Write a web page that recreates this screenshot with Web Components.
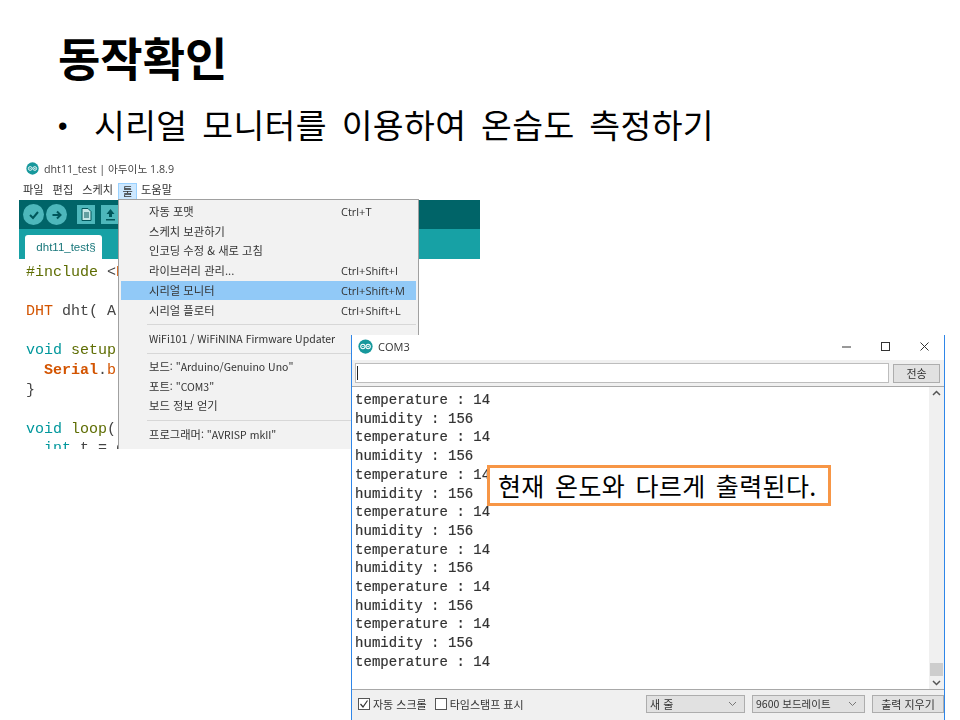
<!DOCTYPE html>
<html lang="ko"><head><meta charset="utf-8"><title>동작확인</title>
<style>
html,body{margin:0;padding:0;background:#fff}
body{width:960px;height:720px;overflow:hidden;font-family:"Noto Sans CJK KR","Liberation Sans",sans-serif}
</style></head><body>
<slide-page>
  <span slot="title">동작확인</span>
  <span slot="bullet">시리얼 모니터를 이용하여 온습도 측정하기</span>
  <ide-window slot="windows"></ide-window>
  <tools-menu slot="windows"></tools-menu>
  <serial-monitor slot="windows"></serial-monitor>
  <note-box slot="windows">현재 온도와 다르게 출력된다.</note-box>
</slide-page>
<script>
const UI='"Noto Sans CJK KR","Liberation Sans",sans-serif';
const logo=s=>`<svg width="${s}" height="${s}" viewBox="0 0 16 16" style="flex:none"><circle cx="8" cy="8" r="7.6" fill="#17989c"/><circle cx="5.2" cy="8" r="2.3" fill="none" stroke="#fff" stroke-width="1.1"/><circle cx="10.8" cy="8" r="2.3" fill="none" stroke="#fff" stroke-width="1.1"/><path d="M4.2 8h2M9.8 8h2M10.8 7v2" stroke="#fff" stroke-width=".7"/></svg>`;
function def(name,html){customElements.define(name,class extends HTMLElement{constructor(){super();this.attachShadow({mode:'open'}).innerHTML=html}})}

def('slide-page',`<style>
:host{display:block;position:relative;width:960px;height:720px;overflow:hidden;color:#000}
header{padding:27px 0 0 58px;font:700 46px/58px ${UI}}
.b{display:flex;padding:15px 0 0 58px;font:400 33.5px/48px ${UI};letter-spacing:.35px;word-spacing:5px}
.b i{font:normal 27px/52px "Liberation Sans",sans-serif;width:36px;flex:none}
</style><header><slot name="title"></slot></header><div class="b"><i>•</i><slot name="bullet"></slot></div><slot name="windows"></slot>`);

def('ide-window',`<style>
:host{display:flex;flex-direction:column;position:absolute;left:19px;top:158px;width:461px;height:291px;overflow:hidden;background:#fff;font:11.2px/1 ${UI};color:#333;filter:blur(.25px)}
.t{height:20px;flex:none;display:flex;align-items:center;gap:5px;padding-left:7px;color:#444;box-sizing:border-box;padding-top:1px}
.t b{font:400 10.7px "Open Sans","Liberation Sans",${UI}}
.m{height:22px;flex:none;display:flex;align-items:center;padding-left:4px;gap:9px;box-sizing:border-box;padding-top:2px}
.m .on{background:#cde8ff;box-shadow:inset 0 0 0 1px #99d1ff;width:19px;height:17px;margin:0 -5px 0 -4px;display:grid;place-items:center;align-self:flex-end}
.tb{height:29px;background:#006468;display:flex;align-items:center;gap:2px;padding-left:4px;flex:none}
.c{width:21px;height:21px;border-radius:50%;background:#4db7bb;display:grid;place-items:center}
.s{width:18px;height:19px;background:#4db7bb;margin-left:8px;display:grid;place-items:center}
.s+.s{margin-left:4px}
.tabs{height:30px;background:#17a1a5;display:flex;align-items:flex-end;padding-left:6px;flex:none}
.tab{height:24px;width:77px;box-sizing:border-box;padding-left:5px;background:#fff;border-radius:3px 3px 0 0;display:flex;align-items:center;justify-content:center;font:11.500px "Liberation Sans",sans-serif;color:#17767a}
pre{margin:0;padding:4px 0 0 7px;font:400 15px/19.6px "Liberation Mono",monospace;color:#444}
.g{color:#5e6d03}.o{color:#d35400}.v{color:#00979c}
</style>
<div class="t">${logo(13)}<b>dht11_test | 아두이노 1.8.9</b></div>
<div class="m"><span>파일</span><span>편집</span><span>스케치</span><span class="on">툴</span><span>도움말</span></div>
<div class="tb">
<div class="c"><svg width="12" height="12" viewBox="0 0 12 12"><path d="M2 6l3 3 5-6" fill="none" stroke="#00575b" stroke-width="2"/></svg></div>
<div class="c"><svg width="12" height="12" viewBox="0 0 12 12"><path d="M1.5 6h7M6 2.500 9.500 6 6 9.500" fill="none" stroke="#00575b" stroke-width="2"/></svg></div>
<div class="s"><svg width="11" height="13" viewBox="0 0 11 13"><path d="M1 .5h6l3 3v9H1z" fill="#c4e6e7" stroke="#00575b"/><path d="M3 5h5M3 7h5M3 9h5" stroke="#00575b"/></svg></div>
<div class="s"><svg width="13" height="13" viewBox="0 0 13 13"><path d="M6.500 1 10.500 6H8v3H5V6H2.500zM2 11h9v1.500H2z" fill="#00575b"/></svg></div>
</div>
<div class="tabs"><div class="tab">dht11_test§</div></div>
<pre><span class="g">#include</span> &lt;<span class="o">D</span>
 
<span class="o">DHT</span> dht( A
 
<span class="v">void</span> <span class="g">setup</span>
  <b class="o">Serial</b>.<span class="o">b</span>
}
 
<span class="v">void</span> <span class="g">loop</span>()
  <span class="v">int</span> t = d</pre>`);

const row=(l,k='',c='')=>`<div class="r ${c}"><span>${l}</span><span class="k">${k}</span></div>`;
const kr=t=>`<em>${t}</em>`;
def('tools-menu',`<style>
:host{display:flex;flex-direction:column;position:absolute;left:118px;top:199px;width:301px;height:250px;box-sizing:border-box;overflow:hidden;background:#f2f2f2;border:solid #a0a0a0;border-width:1px 1px 0 1px;padding:2px;font:10.500px/1 ${UI};color:#333;filter:blur(.2px)}
.r{height:19.700px;display:flex;align-items:center;justify-content:space-between;padding-left:28px;flex:none;white-space:nowrap}
.r .k{width:75px;font:11px "Open Sans","Liberation Sans",sans-serif}
em{font-style:normal;font-size:11.300px}
.h{background:#91c9f7}
hr{border:0;border-top:1px solid #d7d7d7;margin:4px 0 4px 26px;flex:none}
hr.n{margin-bottom:3px}
</style>
${row(kr('자동 포맷'),'Ctrl+T')}${row(kr('스케치 보관하기'))}${row(kr('인코딩 수정 &amp; 새로 고침'))}${row(kr('라이브러리 관리...'),'Ctrl+Shift+I')}${row(kr('시리얼 모니터'),'Ctrl+Shift+M','h')}${row(kr('시리얼 플로터'),'Ctrl+Shift+L')}<hr>${row('WiFi101 / WiFiNINA Firmware Updater')}<hr class="n">${row(kr('보드')+': "Arduino/Genuino Uno"')}${row(kr('포트')+': "COM3"')}${row(kr('보드 정보 얻기'))}<hr>${row(kr('프로그래머')+': "AVRISP mkII"')}`);

let out='';for(let i=0;i<15;i++)out+=(i%2?'humidity : 156':'temperature : 14')+'\n';
def('serial-monitor',`<style>
:host{display:flex;flex-direction:column;position:absolute;left:351px;top:335px;width:594px;height:385px;box-sizing:border-box;background:#f0f0f0;border:solid #2f86e8;border-width:0 1px 0 1px;font:11px/1 ${UI};color:#333;filter:blur(.2px)}
.t{height:25px;background:#fff;display:flex;align-items:center;gap:5px;padding:0 0 3px 6px;box-sizing:border-box;flex:none;font:11px "Open Sans","Liberation Sans",sans-serif}
.ctl{margin-left:auto;display:flex;align-items:center;gap:30px;padding-right:15px}
.in{height:26px;display:flex;align-items:center;gap:4px;padding:0 4px 0 3px;box-sizing:border-box;flex:none}
.in div{flex:1;height:18px;background:#fff;border:1px solid #bdbdbd;display:flex;align-items:center;padding-left:1px}
.in div::before{content:"";width:1px;height:14px;background:#222}
button{font:inherit;color:#333;background:#e1e1e1;border:1px solid #adadad;padding:0;margin:0}
.in button{width:47px;height:19px}
.mid{flex:1;display:flex;min-height:0;background:#fff;border-top:1px solid #a8a8a8;border-bottom:1px solid #a8a8a8}
pre{flex:1;margin:0;padding:4px 0 0 3px;font:14px/18.710px "Liberation Mono",monospace;letter-spacing:.05px;color:#333;-webkit-text-stroke:.2px #333;overflow:hidden}
.sb{width:15px;background:#f0f0f0;display:flex;flex-direction:column;align-items:center;padding:3px 0;box-sizing:border-box;flex:none}
.sb i{width:13px;height:13px;background:#cdcdcd;margin-top:auto;margin-bottom:4px}
.bot{height:30px;display:flex;align-items:center;padding:0 0 2px 6px;box-sizing:border-box;flex:none}
label{display:flex;align-items:center;gap:3px;margin-right:8px}
.sel{height:18px;box-sizing:border-box;background:#e1e1e1;border:1px solid #adadad;display:flex;align-items:center;justify-content:space-between;padding:0 7px 0 3px}
.cb{width:10px;height:10px;border:1px solid #555;background:#fff;display:block;box-sizing:content-box;flex:none}
</style>
<div class="t">${logo(15)}<span>COM3</span><div class="ctl">
<svg width="9" height="9"><path d="M0 5h9" stroke="#333"/></svg>
<svg width="9" height="9"><rect x=".5" y=".5" width="8" height="8" fill="none" stroke="#333"/></svg>
<svg width="9" height="9"><path d="M.5.500l8 8M8.500.500l-8 8" stroke="#333"/></svg>
</div></div>
<div class="in"><div></div><button>전송</button></div>
<div class="mid"><pre>${out}</pre><div class="sb">
<svg width="9" height="6" style="flex:none"><path d="M1 5l3.500-3.500L8 5" fill="none" stroke="#555" stroke-width="1.500"/></svg><i></i>
<svg width="9" height="6" style="flex:none"><path d="M1 1l3.500 3.500L8 1" fill="none" stroke="#555" stroke-width="1.500"/></svg></div></div>
<div class="bot">
<label><svg class="cb" viewBox="0 0 10 10"><path d="M1.500 5l2.500 3L8.500 1.500" fill="none" stroke="#333" stroke-width="1.200"/></svg>자동 스크롤</label>
<label><span class="cb"></span>타임스탬프 표시</label>
<div class="sel" style="width:99px;margin-left:auto"><span>새 줄</span><svg width="9" height="6"><path d="M1 1l3.500 3.500L8 1" fill="none" stroke="#777"/></svg></div>
<div class="sel" style="width:113px;margin-left:7px"><span style="font-size:10.500px">9600 보드레이트</span><svg width="9" height="6"><path d="M1 1l3.500 3.500L8 1" fill="none" stroke="#777"/></svg></div>
<button style="width:72px;height:18px;margin-left:7px">출력 지우기</button>
</div>`);

def('note-box',`<style>
:host{display:flex;align-items:center;position:absolute;left:487px;top:465px;width:344px;height:41px;box-sizing:border-box;background:#fff;border:3px solid #f79646;padding-left:8px;font:400 25px/1 ${UI};color:#000;letter-spacing:.35px;word-spacing:3px;white-space:nowrap}
</style><slot></slot>`);
</script></body></html>
